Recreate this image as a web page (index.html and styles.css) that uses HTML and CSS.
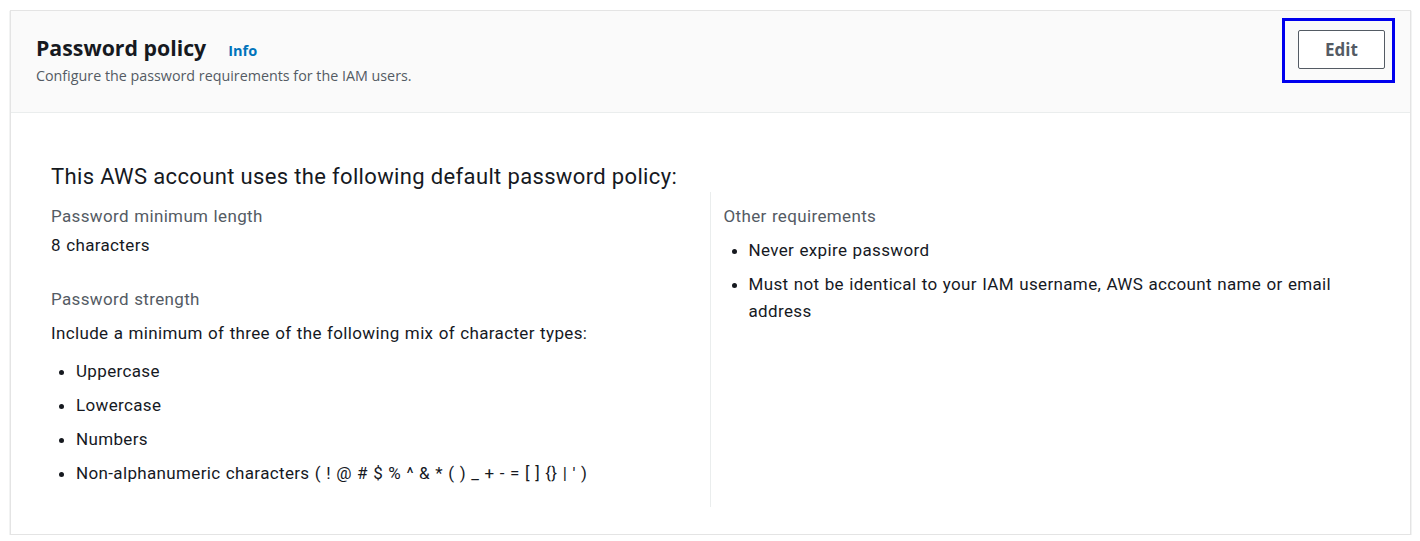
FILE: index.html
```html
<!DOCTYPE html>
<html>
<head>
<meta charset="utf-8">
<link rel="stylesheet" href="styles.css">
</head>
<body>
<div class="card">
  <div class="card-header">
    <div class="header-text">
      <div class="title-row">
        <h2 class="title">Password policy</h2>
        <a class="info">Info</a>
      </div>
      <p class="desc">Configure the password requirements for the IAM users.</p>
    </div>
    <div class="focus-ring">
      <button class="edit-btn">Edit</button>
    </div>
  </div>
  <div class="card-body">
    <h3 class="policy-title">This AWS account uses the following default password policy:</h3>
    <div class="columns">
      <div class="col col-left">
        <div class="label">Password minimum length</div>
        <div class="value">8 characters</div>
        <div class="label label-gap">Password strength</div>
        <div class="value value-tight">Include a minimum of three of the following mix of character types:</div>
        <ul class="list">
          <li>Uppercase</li>
          <li>Lowercase</li>
          <li>Numbers</li>
          <li>Non-alphanumeric characters ( ! @ # $ % ^ &amp; * ( ) _ + - = [ ] {} | ' )</li>
        </ul>
      </div>
      <div class="col col-right">
        <div class="label">Other requirements</div>
        <ul class="list list-right">
          <li>Never expire password</li>
          <li>Must not be identical to your IAM username, AWS account name or email address</li>
        </ul>
      </div>
    </div>
  </div>
</div>
</body>
</html>
```
FILE: styles.css
```css
html, body {
  margin: 0;
  padding: 0;
  background: #ffffff;
}
body {
  padding: 10px 9px 0 10px;
  font-family: "Roboto", "Liberation Sans", sans-serif;
  color: #16191f;
}
.card {
  border: 1px solid #e4e4e4;
  box-shadow: 0 1px 1px rgba(0, 28, 36, 0.3);
  background: #fff;
  height: 525px;
  box-sizing: border-box;
}
.card-header {
  background: #fafafa;
  border-bottom: 1px solid #eaeded;
  height: 102px;
  box-sizing: border-box;
  display: flex;
  justify-content: space-between;
  align-items: flex-start;
  padding: 22px 15px 0 25px;
}
.title-row {
  display: flex;
  align-items: baseline;
}
.title {
  margin: 0;
  font-family: "Open Sans", sans-serif;
  font-size: 21.3px;
  font-weight: 700;
  line-height: 30px;
  color: #16191f;
}
.info {
  font-family: "Open Sans", sans-serif;
  font-size: 14.5px;
  font-weight: 700;
  color: #0073bb;
  margin-left: 22px;
}
.desc {
  margin: 3px 0 0;
  font-family: "Open Sans", sans-serif;
  font-size: 14.3px;
  color: #545b64;
  line-height: 20px;
}
.focus-ring {
  margin-top: -15px;
  border: 3px solid #0000ee;
  padding: 9px 7px 11px 13px;
}
.edit-btn {
  width: 87px;
  height: 39px;
  border: 1px solid #545b64;
  border-radius: 2px;
  background: #fff;
  font-family: "Open Sans", sans-serif;
  font-weight: 700;
  font-size: 17px;
  line-height: 35px;
  color: #545b64;
  padding: 0;
}
.card-body {
  padding: 49px 40px 0 40px;
}
.policy-title {
  margin: 0;
  font-size: 22px;
  font-weight: 400;
  letter-spacing: 0.35px;
  line-height: 30px;
  color: #16191f;
}
.columns {
  display: grid;
  grid-template-columns: 1fr 1fr;
}
.col {
  font-size: 17px;
  letter-spacing: 0.35px;
  word-spacing: 0.7px;
}
.col-left {
  border-right: 1px solid #eaeded;
  padding-top: 12px;
  padding-bottom: 20px;
}
.col-right {
  padding-left: 13px;
  padding-top: 12px;
}
.label {
  color: #545b64;
  line-height: 24px;
}
.label-gap {
  margin-top: 30px;
}
.value {
  color: #16191f;
  line-height: 24px;
  margin-top: 5px;
}
.value-tight {
  margin-top: 10px;
}
.list {
  margin: 0;
  padding: 0 0 0 25px;
  line-height: 27px;
  color: #16191f;
}
.list li {
  margin-top: 7px;
}
.col-left .list {
  margin-top: 12.5px;
}
.col-right .list-right {
  margin-top: 9px;
}
```
